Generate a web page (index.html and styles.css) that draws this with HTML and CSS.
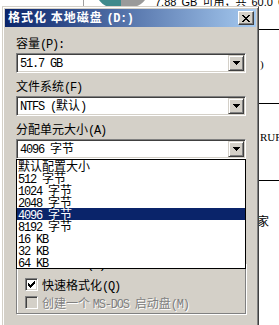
FILE: index.html
```html
<!DOCTYPE html>
<html lang="zh-CN">
<head>
<meta charset="utf-8">
<title>格式化 本地磁盘 (D:)</title>
<link rel="stylesheet" href="styles.css">
</head>
<body>
<div class="desk">
  <div class="bg-top">7.88 GB 可用，共 60.0 GB</div>
  <svg class="bg-drive" width="52" height="10" viewBox="0 0 52 10"><path d="M2 0 C6 6 14 9 24 9 L24 0 Z" fill="#3f8a8c"/><path d="M24 0 L24 9 C34 9 44 6 48 0 Z" fill="#9a9a9a"/></svg>
  <div class="bg-vline"></div>
  <div class="bg-hline l1"></div>
  <div class="bg-hline l2"></div>
  <div class="bg-hline l3"></div>
  <div class="bg-r r1">)</div>
  <div class="bg-r r2">RUFC</div>
  <div class="bg-r r3">家</div>
  <div class="bg-left"></div>

  <div class="win">
    <div class="titlebar">
      <span class="title">格式化 本地磁盘 <span class="en">(D:)</span></span>
      <span class="tbtn">
        <svg width="8" height="7" viewBox="0 0 8 7" shape-rendering="crispEdges"><path d="M0 0h2v1h-2zM6 0h2v1h-2zM1 1h2v1h-2zM5 1h2v1h-2zM2 2h4v1h-4zM3 3h2v1h-2zM2 4h4v1h-4zM1 5h2v1h-2zM5 5h2v1h-2zM0 6h2v1h-2zM6 6h2v1h-2z" fill="#000"/></svg>
      </span>
    </div>
    <div class="content">
      <div class="field">
        <div class="label">容量<span class="en">(P):</span></div>
        <div class="combo">
          <span class="val"><span class="en">51.7 GB</span></span>
          <span class="dbtn"><svg width="7" height="4" viewBox="0 0 7 4" shape-rendering="crispEdges"><path d="M0 0h7v1h-7zM1 1h5v1h-5zM2 2h3v1h-3zM3 3h1v1h-1z" fill="#000"/></svg></span>
        </div>
      </div>
      <div class="field">
        <div class="label">文件系统<span class="en">(F)</span></div>
        <div class="combo">
          <span class="val"><span class="en">NTFS (</span>默认<span class="en">)</span></span>
          <span class="dbtn"><svg width="7" height="4" viewBox="0 0 7 4" shape-rendering="crispEdges"><path d="M0 0h7v1h-7zM1 1h5v1h-5zM2 2h3v1h-3zM3 3h1v1h-1z" fill="#000"/></svg></span>
        </div>
      </div>
      <div class="field">
        <div class="label">分配单元大小<span class="en">(A)</span></div>
        <div class="combo open">
          <span class="val"><span class="en">4096 </span>字节</span>
          <span class="dbtn"><svg width="7" height="4" viewBox="0 0 7 4" shape-rendering="crispEdges"><path d="M0 0h7v1h-7zM1 1h5v1h-5zM2 2h3v1h-3zM3 3h1v1h-1z" fill="#000"/></svg></span>
          <ul class="list">
            <li>默认配置大小</li>
            <li><span class="en">512 </span>字节</li>
            <li><span class="en">1024 </span>字节</li>
            <li><span class="en">2048 </span>字节</li>
            <li class="sel"><span class="en">4096 </span>字节</li>
            <li><span class="en">8192 </span>字节</li>
            <li><span class="en">16 KB</span></li>
            <li><span class="en">32 KB</span></li>
            <li><span class="en">64 KB</span></li>
          </ul>
        </div>
      </div>
      <div class="group">
        <span class="legend">格式化选项<span class="en">(O)</span></span>
        <div class="check">
          <span class="box"><svg width="7" height="7" viewBox="0 0 7 7" shape-rendering="crispEdges"><path d="M0 2h1v3h-1zM1 3h1v3h-1zM2 4h1v3h-1zM3 3h1v3h-1zM4 2h1v3h-1zM5 1h1v3h-1zM6 0h1v3h-1z" fill="#000"/></svg></span>
          <span class="ctext">快速格式化<span class="en">(Q)</span></span>
        </div>
        <div class="check disabled">
          <span class="box"></span>
          <span class="ctext">创建一个 <span class="en">MS-DOS </span>启动盘<span class="en">(M)</span></span>
        </div>
      </div>
    </div>
  </div>
</div>
</body>
</html>
```

FILE: styles.css
```css
* { box-sizing: border-box; margin: 0; padding: 0; }
html, body { width: 279px; height: 325px; overflow: hidden; background: #fff; }
body { font-family: "Noto Sans CJK SC", sans-serif; font-size: 12px; color: #000; }
.en { font-family: "Liberation Mono", "Noto Sans CJK SC", monospace; font-size: 12px; letter-spacing: -1.2px; }

.desk { position: relative; width: 279px; height: 325px; overflow: hidden; background: #fff; }

/* background window bits */
.bg-top { position: absolute; left: 155px; top: -7px; font-family: "Liberation Sans", "Noto Sans CJK SC", sans-serif; font-size: 11px; white-space: nowrap; word-spacing: 2px; }
.bg-drive { position: absolute; left: 97px; top: 0; }
.bg-vline { position: absolute; left: 83px; top: 0; width: 1px; height: 9px; background: #a0a0a0; }
.bg-hline { position: absolute; left: 259px; width: 20px; height: 1px; background: #000; }
.bg-hline.l1 { top: 29px; }
.bg-hline.l2 { top: 103px; }
.bg-hline.l3 { top: 180px; }
.bg-r { position: absolute; left: 260px; font-family: "Liberation Serif", "Noto Sans CJK SC", serif; font-size: 11px; line-height: 12px; white-space: nowrap; }
.bg-r.r1 { top: 58px; }
.bg-r.r2 { top: 131px; }
.bg-r.r3 { top: 216px; left: 257px; font-size: 12px; }
.bg-left { position: absolute; left: 3px; top: 290px; width: 1px; height: 35px; background: #c0c0c0; }

/* window */
.win {
  position: absolute; left: 2px; top: 6px; width: 257px; height: 340px;
  background: #D4D0C8;
  border: 1px solid; border-color: #D4D0C8 #404040 #404040 #D4D0C8;
  box-shadow: inset 1px 1px #fff, inset -1px -1px #808080;
  padding: 2px;
}
.titlebar {
  height: 18px; display: flex; align-items: center;
  background: linear-gradient(to right, #0A246A, #A6CAF0);
  padding: 0 2px 0 3px;
}
.title { color: #fff; font-weight: bold; letter-spacing: 1px; line-height: 18px; white-space: nowrap; }
.title .en { font-weight: bold; letter-spacing: -0.4px; }
.tbtn {
  margin-left: auto; width: 16px; height: 14px;
  display: flex; align-items: center; justify-content: center;
  background: #D4D0C8;
  border: 1px solid; border-color: #fff #404040 #404040 #fff;
  box-shadow: inset -1px -1px #808080;
}

.content { padding: 9px 9px 0 11px; }
.field { margin-bottom: 6px; }
.label { height: 14px; line-height: 14px; margin-bottom: 3px; white-space: nowrap; }

.combo {
  position: relative; width: 230px; height: 20px;
  display: flex; align-items: center;
  background: #fff;
  border: 1px solid; border-color: #808080 #fff #fff #808080;
  box-shadow: inset 1px 1px #404040, inset -1px -1px #D4D0C8;
  padding: 1px;
}
.val { flex: 1; padding-left: 2px; line-height: 16px; white-space: nowrap; }
.dbtn {
  width: 16px; height: 16px;
  display: flex; align-items: center; justify-content: center;
  background: #D4D0C8;
  border: 1px solid; border-color: #D4D0C8 #404040 #404040 #D4D0C8;
  box-shadow: inset 1px 1px #fff, inset -1px -1px #808080;
}

.list {
  position: absolute; left: -1px; top: calc(100% + 1px); width: 230px;
  list-style: none; background: #fff; border: 1px solid #000; z-index: 2;
}
.list li { height: 12px; line-height: 12px; padding-left: 1px; white-space: nowrap; }
.list li.sel { background: #0A246A; color: #fff; }

.group {
  position: relative; margin-top: 104px; width: 230px;
  border: 1px solid #808080;
  box-shadow: inset 1px 1px #fff, 1px 1px #fff;
  padding: 13px 8px 2px 8px;
}
.legend { position: absolute; left: 8px; top: -7px; padding: 0 2px; background: #D4D0C8; line-height: 12px; white-space: nowrap; }
.check { display: flex; align-items: flex-start; height: 16px; margin-bottom: 2px; }
.check:last-child { margin-bottom: 0; }
.box {
  width: 13px; height: 13px; margin-top: 1px;
  display: flex; align-items: center; justify-content: center;
  background: #fff;
  border: 1px solid; border-color: #808080 #fff #fff #808080;
  box-shadow: inset 1px 1px #404040, inset -1px -1px #D4D0C8;
}
.ctext { margin-left: 4px; line-height: 16px; white-space: nowrap; }
.check.disabled .box { background: #D4D0C8; }
.check.disabled .ctext { color: #808080; text-shadow: 1px 1px 0 #fff; }
```
